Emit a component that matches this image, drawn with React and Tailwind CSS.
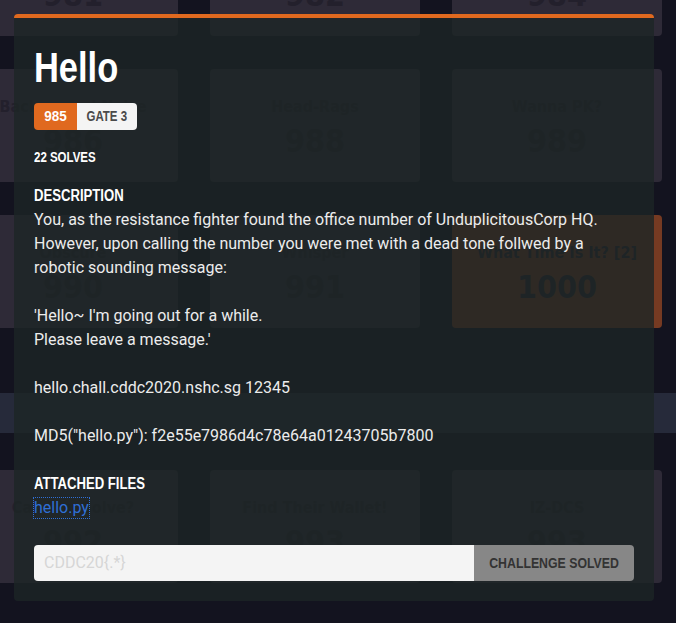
import React from "react"

// Arial-width bold, squeezed to the narrow cut the site uses
const HEAD = "font-['Liberation_Sans',sans-serif] font-bold scale-x-[0.82] origin-left"
const CARD_FONT = "font-['DejaVu_Sans_Condensed','DejaVu_Sans',sans-serif] font-bold"

const rows = [
  [
    { title: "Crack Me", points: 981 },
    { title: "Shutdown", points: 982 },
    { title: "Find Me", points: 984 },
  ],
  [
    { title: "Background Noise", points: 986 },
    { title: "Head-Rags", points: 988 },
    { title: "Wanna PK?", points: 989 },
  ],
  [
    { title: "Obscure", points: 990 },
    { title: "Whisper", points: 991 },
    { title: "What Time Is It? [2]", points: 1000, active: true },
  ],
]

const lastRow = [
  { title: "Can You Solve?", points: 992 },
  { title: "Find Their Wallet!", points: 993 },
  { title: "IZ-DCS", points: 993 },
]

function ChallengeCard({ card }) {

  return (

    <div
      className={
        card.active
          ? "h-[113px] rounded-[4px] bg-[#763a22] flex flex-col items-center pt-[28px]"
          : "h-[113px] rounded-[4px] bg-[#2e2a37] flex flex-col items-center pt-[28px]"
      }
    >

      <div className={`${CARD_FONT} text-[16px] leading-[20px] text-[#23202c]`}>

        {card.title}

      </div>

      <div className={`${CARD_FONT} text-[32px] leading-[36px] mt-[6px] text-[#23202c]`}>

        {card.points}

      </div>

    </div>

  )
}

function CardRow({ cards }) {

  return (

    <div className="grid grid-cols-[210px_210px_210px] gap-x-[32px] -ml-[32px]">

      {cards.map((card, index) => (

        <ChallengeCard key={index} card={card} />

      ))}

    </div>

  )
}

export default function App() {

  return (

    <div className="relative h-[623px] overflow-hidden bg-[#13131f] font-['Roboto',sans-serif]">

      {/* BOARD BEHIND THE MODAL */}

      <div className="-mt-[77px] flex flex-col gap-y-[33px]">

        {rows.map((cards, index) => (

          <CardRow key={index} cards={cards} />

        ))}

      </div>

      <div className="mt-[65px] h-[40px] bg-[#262a3a]"></div>

      <div className="mt-[37px]">

        <CardRow cards={lastRow} />

      </div>

      {/* MODAL */}

      <div className="absolute inset-0 pl-[14px] pt-[14px]">

        <div className="w-[640px] rounded-[4px] border-t-4 border-[#e0691f] bg-[#1d2526]/80 px-[20px] pt-[26px] pb-[20px]">

          <h1 className={`${HEAD} text-[42px] leading-[48px] text-white`}>

            Hello

          </h1>

          <div className="mt-[11px] flex h-[27px] w-fit rounded-[4px] overflow-hidden text-[14px]">

            <span className="w-[43px] bg-[#e0691f] text-white flex items-center justify-center">

              <span className="inline-block font-['Liberation_Sans',sans-serif] font-bold text-[15px] scale-x-[0.9]">985</span>

            </span>

            <span className="w-[60px] bg-[#f4f4f4] text-[#4a4a4a] flex items-center justify-center">

              <span className="inline-block font-['Liberation_Sans',sans-serif] font-bold scale-x-[0.82] whitespace-nowrap">GATE 3</span>

            </span>

          </div>

          <div className={`${HEAD} text-[14px] leading-[20px] mt-[17px] text-white`}>

            22 SOLVES

          </div>

          <h2 className={`${HEAD} text-[16px] leading-[24px] mt-[17px] text-white`}>

            DESCRIPTION

          </h2>

          <div className="text-[16px] leading-[24px] text-[#ececec]">

            <p>You, as the resistance fighter found the office number of UnduplicitousCorp HQ.</p>
            <p>However, upon calling the number you were met with a dead tone follwed by a</p>
            <p>robotic sounding message:</p>
            <p>&nbsp;</p>
            <p>'Hello~ I'm going out for a while.</p>
            <p>Please leave a message.'</p>
            <p>&nbsp;</p>
            <p>hello.chall.cddc2020.nshc.sg 12345</p>
            <p>&nbsp;</p>
            <p>MD5("hello.py"): f2e55e7986d4c78e64a01243705b7800</p>

          </div>

          <h2 className={`${HEAD} text-[16px] leading-[24px] mt-[24px] text-white`}>

            ATTACHED FILES

          </h2>

          <a
            href="#"
            className="inline-block text-[16px] leading-[20px] mt-[1px] text-[#2f6fd6] outline-1 outline-dotted outline-[#2f6fd6]"
          >
            hello.py
          </a>

          <div className="flex h-[36px] mt-[25px] rounded-[4px] overflow-hidden">

            <input
              type="text"
              placeholder="CDDC20{.*}"
              className="flex-1 min-w-0 bg-[#f4f4f4] px-[10px] text-[16px] text-[#333] placeholder:text-[#d6d6d6] outline-none"
            />

            <button className="w-[160px] bg-[#878787] text-[#333] text-[15px] flex items-center justify-center">

              <span className="inline-block font-['Liberation_Sans',sans-serif] font-bold scale-x-[0.82] whitespace-nowrap">CHALLENGE SOLVED</span>

            </button>

          </div>

        </div>

      </div>

    </div>

  )
}
